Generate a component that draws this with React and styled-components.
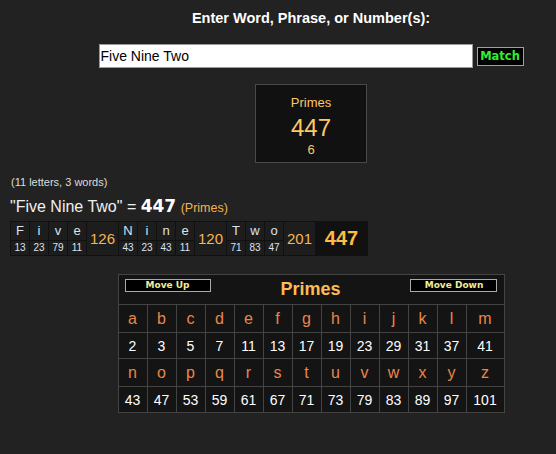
import React from "react";
import styled, { createGlobalStyle } from "styled-components";

const Global = createGlobalStyle`
  html, body { margin: 0; padding: 0; background: #222222; }
  body { font-family: "Liberation Sans", Arial, sans-serif; color: #eeeeee; }
  #root { min-height: 100vh; }
`;

const PRIMES = [2,3,5,7,11,13,17,19,23,29,31,37,41,43,47,53,59,61,67,71,73,79,83,89,97,101];
const ALPHA = "abcdefghijklmnopqrstuvwxyz".split("");
const val = (ch) => PRIMES[ch.toLowerCase().charCodeAt(0) - 97];

const Page = styled.div`
  display: flex;
  flex-direction: column;
  align-items: flex-start;
  padding: 0 0 20px 10px;
`;

const CenterCol = styled.div`
  width: 490px;
  margin-left: 56px;
  display: flex;
  flex-direction: column;
  align-items: center;
`;

const Title = styled.div`
  margin-top: 10px;
  font-size: 14.5px;
  line-height: 17px;
  font-weight: bold;
  color: #ffffff;
`;

const FormRow = styled.div`
  margin-top: 17px;
  display: flex;
  align-items: center;
  gap: 4px;
`;

const Input = styled.input`
  box-sizing: border-box;
  width: 374px;
  height: 24px;
  border: 1px solid #9a9a9a;
  background: #ffffff;
  color: #000000;
  font-family: "Liberation Sans", Arial, sans-serif;
  font-size: 14px;
  padding: 0 1px;
  outline: none;
`;

const MatchButton = styled.button`
  box-sizing: border-box;
  width: 47px;
  height: 19px;
  padding: 0;
  background: #000000;
  border: 1px solid #a0a0a0;
  color: #33ee33;
  font-family: "DejaVu Sans", Verdana, sans-serif;
  font-weight: bold;
  font-size: 11.5px;
  line-height: 17px;
`;

const ResultBox = styled.div`
  margin-top: 16px;
  box-sizing: border-box;
  width: 112px;
  height: 79px;
  background: #111111;
  border: 1px solid #4a4a4a;
  display: flex;
  flex-direction: column;
  align-items: center;
  padding-top: 10px;
  color: #ffc766;
`;

const BoxLabel = styled.div`
  font-size: 13px;
  line-height: 16px;
`;

const BoxValue = styled.div`
  margin-top: 4px;
  font-size: 24px;
  line-height: 26px;
`;

const BoxSub = styled.div`
  margin-top: 1px;
  font-size: 13px;
  line-height: 15px;
`;

const Summary = styled.div`
  margin-top: 13px;
  font-size: 11px;
  line-height: 13px;
  color: #dddddd;
  padding-left: 1px;
`;

const MainLine = styled.div`
  margin-top: 7px;
  font-size: 16px;
  line-height: 20px;
  color: #f0f0f0;
  white-space: pre;
`;

const MainNum = styled.span`
  font-family: "DejaVu Sans", Verdana, sans-serif;
  font-weight: bold;
  font-size: 17px;
  color: #ffffff;
`;

const MainCipher = styled.span`
  font-size: 12.5px;
  color: #f2b350;
`;

const Breakdown = styled.div`
  margin-top: 3px;
  display: flex;
  gap: 1px;
  padding: 1px;
  background: #111111;
`;

const LetterCol = styled.div`
  width: 18px;
  display: flex;
  flex-direction: column;
  gap: 1px;
`;

const LetterCell = styled.div`
  height: 18px;
  background: #1d1d1d;
  color: #dde2ee;
  font-size: 13px;
  line-height: 18px;
  text-align: center;
`;

const NumCell = styled.div`
  height: 14px;
  background: #1d1d1d;
  color: #dde2ee;
  font-size: 10px;
  line-height: 14px;
  text-align: center;
`;

const SubCell = styled.div`
  width: 31px;
  background: #1d1d1d;
  color: #f5b654;
  font-size: 15px;
  display: flex;
  align-items: center;
  justify-content: center;
`;

const TotalCell = styled.div`
  width: 51px;
  background: #111111;
  color: #ffbb44;
  font-size: 20px;
  font-weight: bold;
  display: flex;
  align-items: center;
  justify-content: center;
`;

const Chart = styled.div`
  margin-top: 18px;
  display: grid;
  grid-template-columns: repeat(12, 28px) 37px;
  grid-template-rows: 29px 27px 25px 27px 25px;
  gap: 1px;
  padding: 1px;
  background: #444444;
`;

const ChartHead = styled.div`
  grid-column: 1 / -1;
  background: #141414;
  display: flex;
  justify-content: space-between;
  align-items: flex-start;
  padding: 4px 6px 0;
`;

const MoveButton = styled.button`
  box-sizing: border-box;
  width: ${(p) => p.$w}px;
  height: 13px;
  padding: 0;
  background: #000000;
  border: 1px solid #aaaaaa;
  color: #eeee99;
  font-family: "DejaVu Sans", Verdana, sans-serif;
  font-weight: bold;
  font-size: 9px;
  line-height: 11px;
`;

const ChartTitle = styled.div`
  font-size: 18px;
  line-height: 20px;
  font-weight: bold;
  color: #ffbb55;
`;

const ChartCell = styled.div`
  background: #141414;
  display: flex;
  align-items: center;
  justify-content: center;
  color: ${(p) => (p.$letter ? "#ea8648" : "#ffffff")};
  font-size: ${(p) => (p.$letter ? 16 : 14)}px;
`;

export default function App() {
  const phrase = "Five Nine Two";
  const words = phrase.split(" ");
  const wordSums = words.map((w) => w.split("").reduce((s, c) => s + val(c), 0));
  const total = wordSums.reduce((a, b) => a + b, 0);

  const rows = [ALPHA.slice(0, 13), ALPHA.slice(13)];

  return (
    <>
      <Global />
      <Page>
        <CenterCol>
          <Title>Enter Word, Phrase, or Number(s):</Title>
          <FormRow>
            <Input defaultValue={phrase} />
            <MatchButton>Match</MatchButton>
          </FormRow>
          <ResultBox>
            <BoxLabel>Primes</BoxLabel>
            <BoxValue>{total}</BoxValue>
            <BoxSub>6</BoxSub>
          </ResultBox>
        </CenterCol>

        <Summary>(11 letters, 3 words)</Summary>
        <MainLine>
          {`"${phrase}" = `}
          <MainNum>{total}</MainNum>
          {" "}
          <MainCipher>(Primes)</MainCipher>
        </MainLine>

        <Breakdown>
          {words.map((w, wi) => (
            <React.Fragment key={wi}>
              {w.split("").map((c, ci) => (
                <LetterCol key={ci}>
                  <LetterCell>{c}</LetterCell>
                  <NumCell>{val(c)}</NumCell>
                </LetterCol>
              ))}
              <SubCell>{wordSums[wi]}</SubCell>
            </React.Fragment>
          ))}
          <TotalCell>{total}</TotalCell>
        </Breakdown>

        <CenterCol>
          <Chart>
            <ChartHead>
              <MoveButton $w={86}>Move Up</MoveButton>
              <ChartTitle>Primes</ChartTitle>
              <MoveButton $w={87}>Move Down</MoveButton>
            </ChartHead>
            {rows.map((r, ri) => (
              <React.Fragment key={ri}>
                {r.map((c) => (
                  <ChartCell key={"l" + c} $letter>{c}</ChartCell>
                ))}
                {r.map((c) => (
                  <ChartCell key={"n" + c}>{val(c)}</ChartCell>
                ))}
              </React.Fragment>
            ))}
          </Chart>
        </CenterCol>
      </Page>
    </>
  );
}
